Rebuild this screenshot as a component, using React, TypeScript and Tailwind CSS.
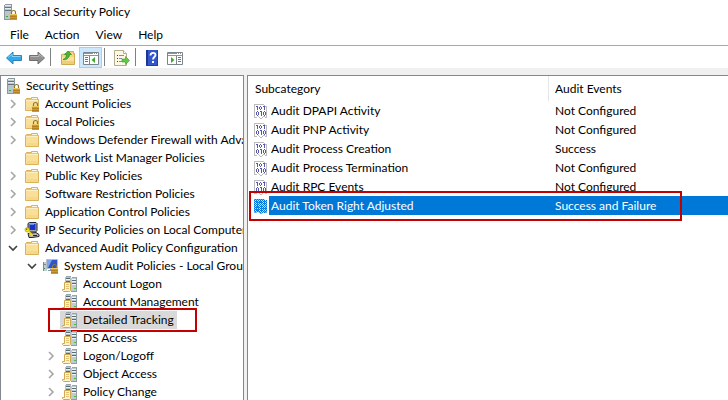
import type { ReactNode } from "react";

function Svg({ w = 16, h = 16, children }: { w?: number; h?: number; children: ReactNode }) {
  return (
    <svg width={w} height={h} viewBox={`0 0 ${w} ${h}`} className="shrink-0" aria-hidden="true">
      {children}
    </svg>
  );
}

function LockShape() {
  return (
    <g>
      <path d="M9.500 11V8.500a2 2 0 0 1 4 0V11" fill="none" stroke="#8d7436" strokeWidth="1.200" />
      <rect x="8" y="10" width="7" height="6" fill="#cf9a2c" />
      <path d="M8 12.500h7M8 14.500h7" stroke="#b5821f" strokeWidth="1" />
      <path d="M8 10.500h7" stroke="#ecc965" strokeWidth="1" />
    </g>
  );
}

function ServerLockIcon() {
  return (
    <Svg>
      <path d="M2 1h1V0h7v1h-1v14H2z" fill="#8b989f" />
      <path d="M3 1h6v14H3z" fill="#b9c6cc" />
      <path d="M3 3.500h6M3 6.500h6" stroke="#66747c" />
      <path d="M3 4.500h6M3 1.500h6" stroke="#e6edef" />
      <path d="M9.500 1v14M2 15.500h8" stroke="#8b989f" />
      <rect x="4" y="12" width="2" height="1" fill="#3aa34a" />
      <LockShape />
    </Svg>
  );
}

function FolderShape() {
  return (
    <g>
      <path d="M1.500 3.500V14.500H14.500V3.500H13.500V1.500H7.500V2.500H2.500z" fill="#e9c46b" stroke="#d9b45c" />
      <path d="M8 2.500h5" stroke="#fff8dc" />
      <path d="M2 4h12v10H2z" fill="#f9df98" />
      <path d="M2 4.500h12" stroke="#fdf0c4" />
      <path d="M3 11h11v3H3z" fill="#f6d888" />
    </g>
  );
}

function FolderIcon() {
  return (
    <Svg>
      <FolderShape />
    </Svg>
  );
}

function FolderLockIcon() {
  return (
    <Svg>
      <FolderShape />
      <LockShape />
    </Svg>
  );
}

function ComputerKeyIcon() {
  return (
    <Svg>
      <path d="M4 1.500 5.500.5H12l1 1v7l-1.500 1.500H5L4 9z" fill="#a9a9b5" stroke="#23233a" />
      <path d="M5.500 2h6v6h-6z" fill="#1733c8" />
      <path d="M6 2.500h4" stroke="#6f8df0" />
      <path d="M4 11.500 12 10.500l3 2v2L8 15.500H5z" fill="#b5b5ae" stroke="#26262b" />
      <path d="M9 13.500h4" stroke="#26262b" />
      <circle cx="3.200" cy="7.800" r="2.200" fill="#f5e616" stroke="#94880b" strokeWidth=".6" />
      <circle cx="2.700" cy="7.300" r=".7" fill="#5f5700" />
      <path d="m4.500 9 4 5M6.500 13l1.500-1.200" stroke="#f0de12" strokeWidth="1.800" />
    </Svg>
  );
}

function SystemAuditIcon() {
  return (
    <Svg>
      <path d="M0 4h4v9H0z" fill="#c2cbd2" />
      <path d="M.5 4v9M0 6.500h3" stroke="#7d8890" />
      <rect x="1" y="10" width="1" height="1" fill="#2ca045" />
      <path d="M3.500 1.500h11v9h-11z" fill="#2b55c8" stroke="#b6bdcb" />
      <path d="M4 2h5L5 10H4z" fill="#7fa4ec" />
      <path d="M5 12.500h5M7.500 11v2" stroke="#8a939c" />
      <LockShape />
    </Svg>
  );
}

function AuditServerIcon() {
  return (
    <Svg>
      <path d="M4 0h5v9H4zM3 1h6v8H3z" fill="#b4c1c8" />
      <path d="M9 2h6v14H9z" fill="#bfcbd1" />
      <path d="M4 .5h5M10 1.500h5" stroke="#98a5ac" />
      <path d="M4 2.500h4M4 5.500h4M10 4.500h4M10 7.500h4" stroke="#5c6a73" />
      <path d="M4 3.500h4M10 3.500h4M10 5.500h4M10 8.500h4" stroke="#eef3f5" />
      <path d="M14.500 2v14M9 15.500h6" stroke="#8e9ca4" />
      <rect x="12" y="12" width="2" height="1" fill="#47c02f" />
      <path d="M2.500 6.500H8.500v8l-1 1H1.500l-1-1v-1h2z" fill="#fdf3cf" stroke="#cfa854" />
      <path d="M4 8.500h3M4 10.500h3M4 12.500h3" stroke="#e3bf71" />
    </Svg>
  );
}

function PolicyIcon({ selected = false }: { selected?: boolean }) {
  return (
    <Svg w={14} h={16}>
      <g shapeRendering="crispEdges">
        <path d="M0 1h10l3 2v12h-2v-1h-1v1h-2v1h-2v-1H4v-1H0z" fill={selected ? "#c4e0f7" : "#ffffff"} />
        <path
          d="M.5 14v-12.500h9.500M10.500 2v1M11 3.500h2M12.500 4v11M0 14.500h3M4 13.500h1M5 14.500h1M6 15.500h2M8 14.500h1M9 13.500h2M11 14.500h1"
          fill="none"
          stroke={selected ? "#6ab0e8" : "#bcbcbc"}
        />
        <path
          d="M2 3.500h1M3.500 3v4M6 3.500h1M5.500 4v2M7.500 4v2M6 6.500h1M9 3.500h1M10.500 3v4M3 8.500h1M2.500 9v3M4.500 9v3M3 12.500h1M6 8.500h1M7.500 8v5M10 8.500h1M9.500 9v3M11.500 9v3M10 12.500h1"
          fill="none"
          stroke={selected ? "#2a86d6" : "#5656ae"}
        />
        {selected && (
          <>
            <path
              d="M0 2.500h13M0 4.500h13M0 6.500h13M0 8.500h13M0 10.500h13M0 12.500h13M6 14.500h6"
              stroke="#0078d7"
              strokeDasharray="1 1"
            />
            <path
              d="M1 1.500h9M1 3.500h12M1 5.500h12M1 7.500h12M1 9.500h12M1 11.500h12M1 13.500h12"
              stroke="#0078d7"
              strokeDasharray="1 1"
            />
          </>
        )}
      </g>
    </Svg>
  );
}

function BackIcon() {
  return (
    <Svg w={18}>
      <path d="M1.500 8 8 2V5.500h8.500v5H8V14z" fill="#2fa8ea" stroke="#3b7fae" />
      <path d="M3 7.500 7 4v2.500h8.500" fill="none" stroke="#7fd3fa" />
    </Svg>
  );
}

function ForwardIcon() {
  return (
    <Svg w={18}>
      <path d="M16.500 8 10 2V5.500H1.500v5H10V14z" fill="#8f8f8f" stroke="#707070" />
      <path d="M2.500 6.500h8.500V4l4 3.500" fill="none" stroke="#b9b9b9" />
    </Svg>
  );
}

function UpFolderIcon() {
  return (
    <Svg>
      <path d="M1.500 4.500V14.500H14.500V3.500H13.500V1.500H8.500V3.500z" fill="#f3d583" stroke="#cfa850" />
      <path d="M2 7h12v7H2z" fill="#f9e09b" />
      <path d="M2 11h12v3H2z" fill="#f0cd7a" />
      <path d="M3 9.500C5 9 6.500 7 6.500 4.500H4.500L8 1l3.500 3.500h-2C9.500 7.500 6.500 10.500 3 9.500z" fill="#45b931" stroke="#2d8a20" strokeWidth=".7" />
    </Svg>
  );
}

function PaneIcon({ side }: { side: "left" | "right" }) {
  return (
    <Svg>
      <path d="M.5 2.500h15v12H.5z" fill="#ffffff" stroke="#7c858c" />
      <path d="M1 3h14v1H1z" fill="#8b959d" />
      <path d="M1 5.500h14" stroke="#8b959d" />
      <path d="M10 3.500h1M12 3.500h1M14 3.500h1" stroke="#ffffff" />
      {side === "left" ? (
        <>
          <path d="M6.500 6v8" stroke="#7c858c" />
          <path d="M2 7.500h3M2 9.500h3M2 11.500h3" stroke="#3c7fc6" />
          <path d="M12 7v6L8.500 10z" fill="#3faa2e" />
        </>
      ) : (
        <>
          <path d="M9.500 6v8" stroke="#7c858c" />
          <path d="M11 7.500h3M11 9.500h3M11 11.500h3" stroke="#3c7fc6" />
          <path d="M4 7v6L7.500 10z" fill="#3faa2e" />
        </>
      )}
    </Svg>
  );
}

function ExportIcon() {
  return (
    <Svg>
      <path d="M.5.5h9l3 3v12H.5z" fill="#fdf8e4" stroke="#b3ab92" />
      <path d="M9.500.5v3h3" fill="#ffffff" stroke="#b3ab92" />
      <path d="M3 5.500h1M3 8.500h1M3 11.500h1" stroke="#3a3a3a" />
      <path d="M5 5.500h5M5 8.500h3M5 11.500h3" stroke="#8b8bb5" />
      <path d="M8 9h3.500V6.500L15.500 10.500l-4 4V12H8z" fill="#5fcb45" stroke="#3a9a28" strokeWidth=".6" />
    </Svg>
  );
}

function HelpIcon() {
  return (
    <Svg>
      <path d="M2 0h12v16H2z" fill="#3457c9" />
      <path d="M2 0h2v16H2z" fill="#1d3796" />
      <path d="M13.500 0v16M2 15.500h12" stroke="#23409f" />
      <path d="M6.500 5.500c0-3.500 5-3.500 5-.5 0 2-2.500 2-2.500 4.500" fill="none" stroke="#ffffff" strokeWidth="1.800" />
      <path d="M8 11h2v2H8z" fill="#ffffff" />
    </Svg>
  );
}

function Chevron({ open }: { open: boolean }) {
  return (
    <Svg w={10} h={10}>
      {open ? (
        <path d="m1 3 4 4 4-4" fill="none" stroke="#404040" strokeWidth="1.600" />
      ) : (
        <path d="m3 1 4 4-4 4" fill="none" stroke="#a6a6a6" strokeWidth="1.600" />
      )}
    </Svg>
  );
}

type Item = { label: string; level: 0 | 1 | 2 | 3; icon: ReactNode; open?: boolean; selected?: boolean };

const tree: Item[] = [
  { label: "Security Settings", level: 0, icon: <ServerLockIcon /> },
  { label: "Account Policies", level: 1, icon: <FolderLockIcon />, open: false },
  { label: "Local Policies", level: 1, icon: <FolderLockIcon />, open: false },
  { label: "Windows Defender Firewall with Advanced Security", level: 1, icon: <FolderIcon />, open: false },
  { label: "Network List Manager Policies", level: 1, icon: <FolderIcon /> },
  { label: "Public Key Policies", level: 1, icon: <FolderIcon />, open: false },
  { label: "Software Restriction Policies", level: 1, icon: <FolderIcon />, open: false },
  { label: "Application Control Policies", level: 1, icon: <FolderIcon />, open: false },
  { label: "IP Security Policies on Local Computer", level: 1, icon: <ComputerKeyIcon />, open: false },
  { label: "Advanced Audit Policy Configuration", level: 1, icon: <FolderIcon />, open: true },
  { label: "System Audit Policies - Local Group Policy Object", level: 2, icon: <SystemAuditIcon />, open: true },
  { label: "Account Logon", level: 3, icon: <AuditServerIcon /> },
  { label: "Account Management", level: 3, icon: <AuditServerIcon /> },
  { label: "Detailed Tracking", level: 3, icon: <AuditServerIcon />, selected: true },
  { label: "DS Access", level: 3, icon: <AuditServerIcon /> },
  { label: "Logon/Logoff", level: 3, icon: <AuditServerIcon />, open: false },
  { label: "Object Access", level: 3, icon: <AuditServerIcon />, open: false },
  { label: "Policy Change", level: 3, icon: <AuditServerIcon />, open: false },
];

const indent = ["pl-[2px]", "pl-[7px]", "pl-[26px]", "pl-[45px]"];

function TreeRow({ item }: { item: Item }) {
  return (
    <li
      role="treeitem"
      aria-level={item.level + 1}
      aria-selected={!!item.selected}
      aria-expanded={item.open}
      className={`relative flex h-[18px] items-center ${indent[item.level]}`}
    >
      {item.level > 0 && (
        <span className="flex w-[14px] shrink-0">{item.open !== undefined && <Chevron open={item.open} />}</span>
      )}
      <button
        type="button"
        className={`flex h-[18px] shrink-0 items-center gap-[5px] pr-[3px] pl-[2px] whitespace-nowrap ${item.selected ? "bg-[#d9d9d9]" : ""}`}
      >
        {item.icon}
        <span>{item.label}</span>
      </button>
      {item.selected && (
        <span className="pointer-events-none absolute -inset-y-[3px] right-[46px] left-[47px] border-2 border-[#c40000]" />
      )}
    </li>
  );
}

const policies = [
  ["Audit DPAPI Activity", "Not Configured"],
  ["Audit PNP Activity", "Not Configured"],
  ["Audit Process Creation", "Success"],
  ["Audit Process Termination", "Not Configured"],
  ["Audit RPC Events", "Not Configured"],
  ["Audit Token Right Adjusted", "Success and Failure"],
];

function Divider() {
  return (
    <span className="flex h-[20px] items-start">
      <span className="h-[18px] w-px bg-[#808080]" />
    </span>
  );
}

function Tool({ label, active = false, children }: { label: string; active?: boolean; children: ReactNode }) {
  return (
    <button
      type="button"
      aria-label={label}
      className={`flex h-[21px] w-[23px] items-center justify-center ${active ? "border border-[#99d1ff] bg-[#cce8ff]" : ""}`}
    >
      {children}
    </button>
  );
}

export default function App() {
  return (
    <div className="flex h-screen flex-col overflow-hidden bg-[#f0f0f0] font-['Lato',sans-serif] text-[12px] leading-[18px] text-black">
      <header className="shrink-0 bg-white">
        <div className="flex h-6 items-center gap-[5px] pl-[2px]">
          <ServerLockIcon />
          <h1>Local Security Policy</h1>
        </div>
        <nav className="flex h-[21px] items-center gap-4 pl-[10px]">
          {["File", "Action", "View", "Help"].map((m) => (
            <button key={m} type="button">
              {m}
            </button>
          ))}
        </nav>
        <div role="toolbar" className="flex h-[23px] items-end border-t border-[#a8a8a8] pl-[2px]">
          <span className="flex pr-[2px]">
            <Tool label="Back"><BackIcon /></Tool>
            <Tool label="Forward"><ForwardIcon /></Tool>
          </span>
          <Divider />
          <span className="flex pr-[2px] pl-[5px]">
            <Tool label="Up one level"><UpFolderIcon /></Tool>
            <Tool label="Show/Hide console tree" active><PaneIcon side="left" /></Tool>
          </span>
          <Divider />
          <span className="flex pr-[2px] pl-[5px]">
            <Tool label="Export list"><ExportIcon /></Tool>
          </span>
          <Divider />
          <span className="flex pl-1">
            <Tool label="Help"><HelpIcon /></Tool>
            <Tool label="Show/Hide action pane"><PaneIcon side="right" /></Tool>
          </span>
        </div>
      </header>

      <main className="mt-[7px] flex min-h-0 grow gap-[3px]">
        <ul role="tree" className="w-[244px] shrink-0 overflow-hidden border border-b-0 border-[#828790] bg-white pt-px">
          {tree.map((item) => (
            <TreeRow key={item.label} item={item} />
          ))}
        </ul>

        <section className="min-w-0 grow border-t border-l border-[#828790] bg-white">
          <table className="w-full table-fixed border-separate border-spacing-0">
            <colgroup>
              <col className="w-[301px]" />
              <col />
            </colgroup>
            <thead>
              <tr className="h-[25px] text-left">
                <th className="border-r border-[#e5e5e5] p-0 pl-[7px] font-normal">Subcategory</th>
                <th className="p-0 pl-[6px] font-normal">Audit Events</th>
              </tr>
            </thead>
            <tbody>
              {policies.map(([name, value], i) => {
                const selected = i === policies.length - 1;
                return (
                  <tr key={name} className={`h-[19px] ${selected ? "text-white" : ""}`}>
                    <td className="p-0">
                      <div className="relative flex h-[19px] items-center gap-px pl-[6px]">
                        <PolicyIcon selected={selected} />
                        <span className={`flex h-[19px] grow items-center pl-[2px] ${selected ? "bg-[#0078d7]" : ""}`}>
                          {name}
                        </span>
                        {selected && (
                          <span className="pointer-events-none absolute top-[-5px] left-px z-10 h-[30px] w-[433px] border-2 border-[#c40000]" />
                        )}
                      </div>
                    </td>
                    <td className={`p-0 pl-[6px] ${selected ? "bg-[#0078d7]" : ""}`}>{value}</td>
                  </tr>
                );
              })}
            </tbody>
          </table>
        </section>
      </main>
    </div>
  );
}
